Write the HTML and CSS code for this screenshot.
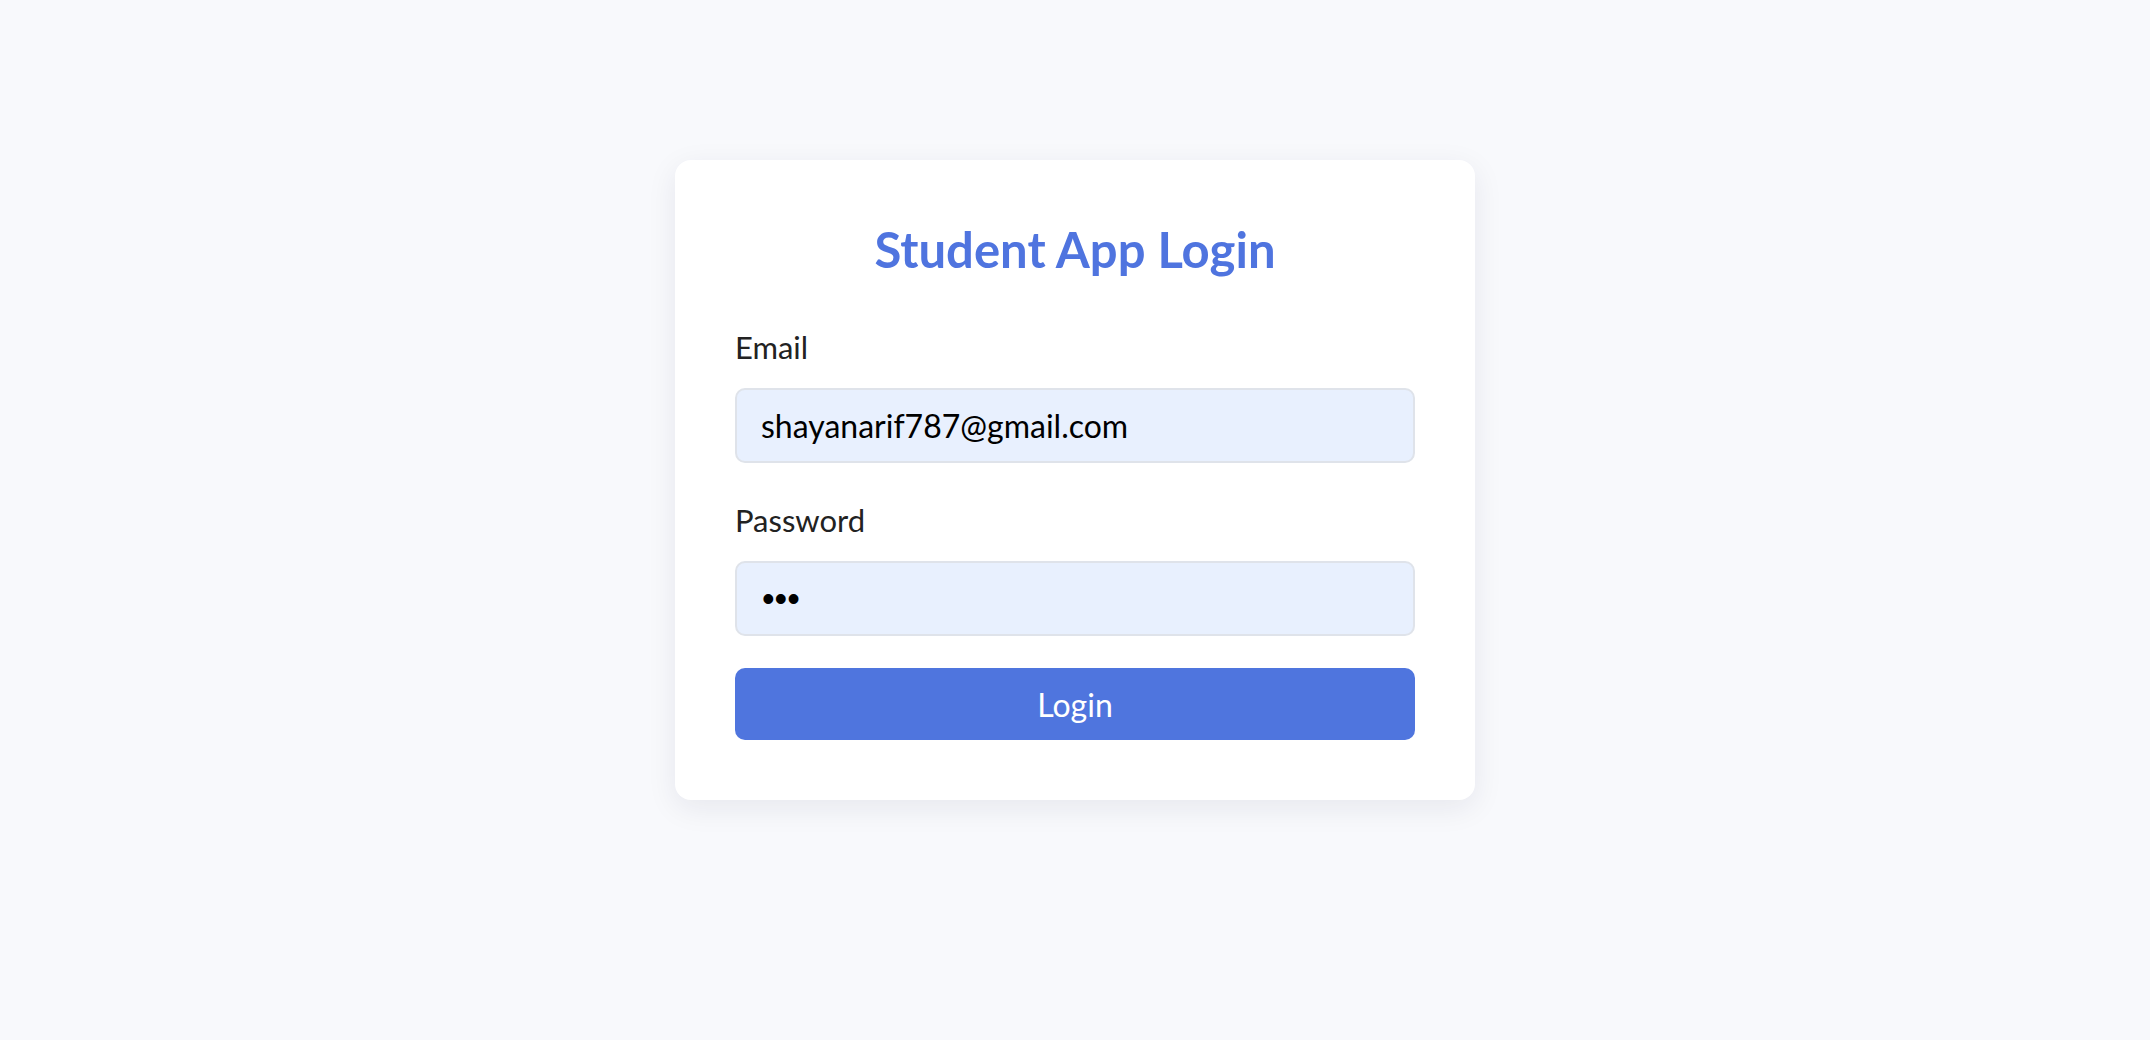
FILE: index.html
```html
<!DOCTYPE html>
<html lang="en">
<head>
<meta charset="utf-8">
<title>Student App Login</title>
<link rel="stylesheet" href="styles.css">
</head>
<body>
  <main class="card">
    <h2 class="title">Student App Login</h2>
    <form class="form">
      <div class="field">
        <label class="label" for="email">Email</label>
        <input class="input" id="email" type="email" value="shayanarif787@gmail.com">
      </div>
      <div class="field">
        <label class="label" for="password">Password</label>
        <input class="input input-password" id="password" type="password" value="abc">
      </div>
      <button class="button" type="button">Login</button>
    </form>
  </main>
</body>
</html>
```
FILE: styles.css
```css
* { box-sizing: border-box; }
html, body { margin: 0; }
body {
  min-height: 100vh;
  background: #f8f9fc;
  font-family: Lato, "Open Sans", sans-serif;
  padding-top: 160px;
}
.card {
  width: 800px;
  margin: 0 auto;
  background: #ffffff;
  border-radius: 16px;
  padding: 60px;
  box-shadow: 0 8px 30px rgba(20, 30, 60, 0.08);
}
.title {
  margin: 0 0 46px;
  text-align: center;
  color: #4f74df;
  font-size: 49px;
  font-weight: 700;
  line-height: 58px;
}
.form { display: flex; flex-direction: column; }
.field { display: flex; flex-direction: column; margin-bottom: 34px; }
.field:last-of-type { margin-bottom: 32px; }
.label {
  display: block;
  font-size: 31px;
  line-height: 46px;
  color: #222222;
  margin-bottom: 18px;
}
.input {
  width: 100%;
  height: 75px;
  padding: 0 24px;
  border: 2px solid #dfe3ea;
  border-radius: 10px;
  background: #e8f0fe;
  color: #000000;
  font-family: Lato, "Open Sans", sans-serif;
  font-size: 32px;
  outline: none;
}
.input-password {
  font-family: "Liberation Sans", Arial, sans-serif;
  font-size: 36px;
  padding-left: 25px;
}
.button {
  width: 100%;
  height: 72px;
  border: none;
  border-radius: 10px;
  background: #4f75de;
  color: #ffffff;
  font-family: Lato, "Open Sans", sans-serif;
  font-size: 32px;
  cursor: pointer;
}
```
